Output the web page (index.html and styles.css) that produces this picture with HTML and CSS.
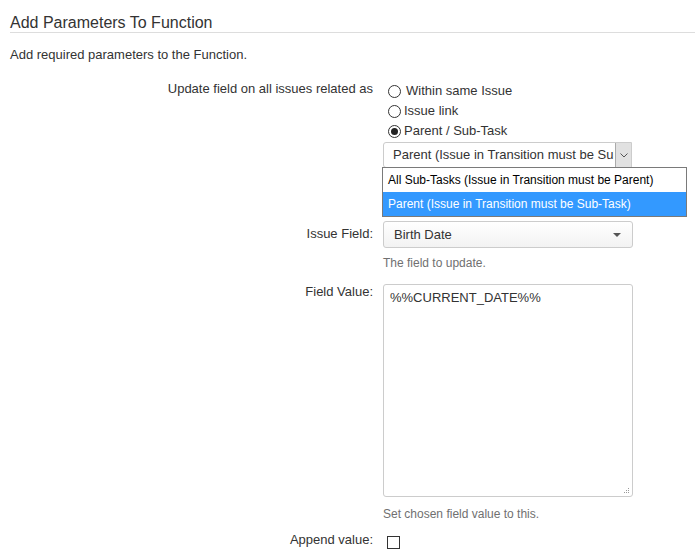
FILE: index.html
```html
<!DOCTYPE html>
<html>
<head>
<meta charset="utf-8">
<link rel="stylesheet" href="styles.css">
</head>
<body>
<div class="page">
  <h2 class="title">Add Parameters To Function</h2>
  <p class="intro">Add required parameters to the Function.</p>

  <div class="form">
    <div class="row row-relation">
      <div class="label">Update field on all issues related as</div>
      <div class="field">
        <div class="radios">
          <div class="radio"><span class="circle"></span><span class="radio-text radio-text-wide">Within same Issue</span></div>
          <div class="radio"><span class="circle"></span><span class="radio-text">Issue link</span></div>
          <div class="radio"><span class="circle checked"></span><span class="radio-text">Parent / Sub-Task</span></div>
        </div>
        <div class="native-select">
          <span class="native-text">Parent (Issue in Transition must be Sub-Task)</span>
          <span class="native-arrow">
            <svg width="8" height="5" viewBox="0 0 8 5"><path d="M0.5 0.5 L4 4 L7.5 0.5" fill="none" stroke="#555" stroke-width="1"/></svg>
          </span>
          <ul class="popup">
            <li class="option">All Sub-Tasks (Issue in Transition must be Parent)</li>
            <li class="option option-selected">Parent (Issue in Transition must be Sub-Task)</li>
          </ul>
        </div>
      </div>
    </div>

    <div class="row row-issue">
      <div class="label label-select">Issue Field:</div>
      <div class="field">
        <div class="select">
          <span class="select-text">Birth Date</span>
          <span class="select-caret"></span>
        </div>
        <div class="desc">The field to update.</div>
      </div>
    </div>

    <div class="row row-value">
      <div class="label label-area">Field Value:</div>
      <div class="field">
        <div class="textarea">%%CURRENT_DATE%%
          <svg class="grip" width="7" height="7" viewBox="0 0 7 7">
            <rect x="5" y="1" width="1" height="1" fill="#999"/>
            <rect x="3" y="3" width="1" height="1" fill="#999"/>
            <rect x="5" y="3" width="1" height="1" fill="#999"/>
            <rect x="1" y="5" width="1" height="1" fill="#999"/>
            <rect x="3" y="5" width="1" height="1" fill="#999"/>
            <rect x="5" y="5" width="1" height="1" fill="#999"/>
          </svg>
        </div>
        <div class="desc desc-area">Set chosen field value to this.</div>
      </div>
    </div>

    <div class="row row-append">
      <div class="label">Append value:</div>
      <div class="field">
        <span class="checkbox"></span>
      </div>
    </div>
  </div>
</div>
</body>
</html>
```

FILE: styles.css
```css
html, body {
  margin: 0;
  padding: 0;
  background: #fff;
}

body {
  font-family: "Liberation Sans", Arial, sans-serif;
  font-size: 13px;
  color: #333;
}

.page {
  padding: 14px 0 0 10px;
}

.title {
  margin: 0;
  font-size: 16px;
  font-weight: normal;
  line-height: 18px;
  color: #333;
  border-bottom: 1px solid #ddd;
}

.intro {
  margin: 13px 0 0 0;
  line-height: 18px;
}

.form {
  margin-top: 16px;
  display: flex;
  flex-direction: column;
}

.row {
  display: grid;
  grid-template-columns: 363px 1fr;
  column-gap: 10px;
  align-items: start;
}

.label {
  text-align: right;
  line-height: 18px;
  color: #333;
}

.label-select {
  padding-top: 4px;
}

.label-area {
  padding-top: 0;
  margin-top: -1px;
}

.field {
  display: flex;
  flex-direction: column;
  align-items: flex-start;
}

/* radios */
.radios {
  display: flex;
  flex-direction: column;
  padding-top: 1px;
}

.radio {
  height: 20px;
  display: flex;
  align-items: center;
  padding-left: 5px;
}

.circle {
  width: 11px;
  height: 11px;
  border: 1px solid #333;
  border-radius: 50%;
  background: #fff;
  box-sizing: content-box;
  display: flex;
  align-items: center;
  justify-content: center;
  flex: none;
}

.circle.checked::after {
  content: "";
  width: 7px;
  height: 7px;
  border-radius: 50%;
  background: #222;
}

.radio-text {
  margin-left: 3px;
  line-height: 18px;
}

.radio-text-wide {
  margin-left: 5px;
}

/* native select */
.native-select {
  position: relative;
  margin-top: 1px;
  width: 249px;
  height: 26px;
  box-sizing: border-box;
  border: 1px solid #ccc;
  border-radius: 3px 0 0 3px;
  background: #fff;
  display: flex;
  align-items: stretch;
}

.native-text {
  flex: 1;
  overflow: hidden;
  white-space: nowrap;
  padding-left: 9px;
  line-height: 24px;
  color: #333;
}

.native-arrow {
  width: 15px;
  margin: 0 0 0 1px;
  border-left: 1px solid #aaa;
  background: #e1e1e1;
  display: flex;
  align-items: center;
  justify-content: center;
  flex: none;
}

.popup {
  position: absolute;
  top: 100%;
  left: -2px;
  margin: 0;
  padding: 0;
  list-style: none;
  width: 305px;
  box-sizing: border-box;
  border: 1px solid #7a7a7a;
  background: #fff;
  z-index: 5;
  font-size: 12px;
}

.option {
  height: 24px;
  line-height: 24px;
  padding-left: 5px;
  color: #000;
  white-space: nowrap;
}

.option-selected {
  background: #3399ff;
  color: #fff;
}

/* issue field */
.row-issue {
  margin-top: 53px;
}

.select {
  width: 250px;
  height: 27px;
  box-sizing: border-box;
  border: 1px solid #ccc;
  border-radius: 3px;
  background: linear-gradient(#ffffff, #f2f2f2);
  display: flex;
  align-items: center;
  justify-content: space-between;
  padding: 0 11px 0 10px;
}

.select-text {
  line-height: 18px;
  color: #333;
}

.select-caret {
  width: 0;
  height: 0;
  border-left: 4px solid transparent;
  border-right: 4px solid transparent;
  border-top: 4px solid #555;
}

.desc {
  margin-top: 7px;
  font-size: 12px;
  line-height: 16px;
  color: #707070;
}

.desc-area {
  margin-top: 9px;
}

/* field value */
.row-value {
  margin-top: 13px;
}

.textarea {
  position: relative;
  width: 250px;
  height: 213px;
  box-sizing: border-box;
  border: 1px solid #ccc;
  border-radius: 3px;
  background: #fff;
  padding: 4px 6px;
  line-height: 18px;
  color: #333;
}

.grip {
  position: absolute;
  right: 2px;
  bottom: 2px;
}

/* append */
.row-append {
  margin-top: 9px;
}

.row-append .field {
  height: 18px;
  justify-content: center;
}

.checkbox {
  display: block;
  width: 11px;
  height: 11px;
  margin-left: 4px;
  margin-top: 4px;
  border: 1px solid #333;
  background: #fff;
}
```
